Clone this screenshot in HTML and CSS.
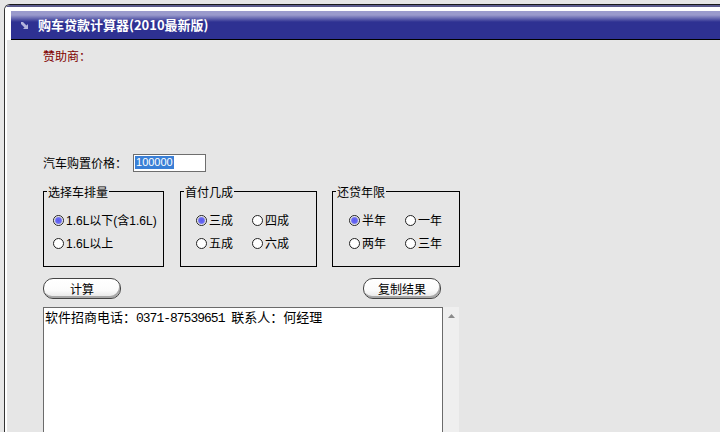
FILE: index.html
```html
<!DOCTYPE html>
<html lang="zh-CN">
<head>
    <meta charset="UTF-8">
    <title>购车贷款计算器(2010最新版)</title>
    <link rel="stylesheet" href="styles.css">
</head>
<body>
    <div class="window">
        <div class="window-head">
            <div class="titlebar">
                <svg class="title-icon" width="7" height="7" viewBox="0 0 7 7">
                    <path d="M0 0 L2 0 L7 5 L7 7 L5 7 L0 2 Z" fill="#b4b4dc"/>
                    <path d="M7 2 L7 7 L2 7 Z" fill="#b4b4dc"/>
                </svg>
                <span class="title-text">购车贷款计算器(2010最新版)</span>
            </div>
        </div>

        <div class="content">
            <div class="sponsor">赞助商：</div>

            <div class="price-row">
                <label class="price-label">汽车购置价格：</label>
                <div class="price-input"><span class="selected">100000</span></div>
            </div>

            <div class="groups">
                <fieldset class="group group-engine">
                    <legend>选择车排量</legend>
                    <div class="opts">
                        <div class="opt"><span class="radio on"></span>1.6L以下(含1.6L)</div>
                        <div class="opt"><span class="radio"></span>1.6L以上</div>
                    </div>
                </fieldset>
                <fieldset class="group group-down">
                    <legend>首付几成</legend>
                    <div class="opts two-col">
                        <div class="opt"><span class="radio on"></span>三成</div>
                        <div class="opt"><span class="radio"></span>四成</div>
                        <div class="opt"><span class="radio"></span>五成</div>
                        <div class="opt"><span class="radio"></span>六成</div>
                    </div>
                </fieldset>
                <fieldset class="group group-years">
                    <legend>还贷年限</legend>
                    <div class="opts two-col">
                        <div class="opt"><span class="radio on"></span>半年</div>
                        <div class="opt"><span class="radio"></span>一年</div>
                        <div class="opt"><span class="radio"></span>两年</div>
                        <div class="opt"><span class="radio"></span>三年</div>
                    </div>
                </fieldset>
            </div>

            <div class="buttons">
                <button class="pill-button">计算</button>
                <button class="pill-button">复制结果</button>
            </div>

            <div class="result-row">
                <div class="result">软件招商电话：<span class="ascii">0371-87539651 </span>联系人：何经理</div>
                <div class="scrollbar">
                    <svg class="scroll-up" width="7" height="4" viewBox="0 0 7 4">
                        <path d="M0 4 L3.5 0 L7 4 Z" fill="#8a8a8a"/>
                    </svg>
                </div>
            </div>
        </div>
    </div>
</body>
</html>
```

FILE: styles.css
```css
body {
    margin: 0;
    background-color: #e6e6e6;
    font-family: "Liberation Sans", "Noto Sans CJK SC", sans-serif;
    font-size: 12px;
    color: #000;
    overflow: hidden;
}

.window {
    margin: 4px 0 0 4px;
    border-top: 1px solid #1a1a1a;
    border-left: 1px solid #333;
    border-top-left-radius: 6px;
    overflow: hidden;
    background-color: #fff;
}

.window-head {
    border-top: 2px solid #5b5b8c;
    padding: 4px 0 0 6px;
    background-color: #fff;
}

.titlebar {
    height: 28px;
    border-bottom: 1px solid #000;
    background: linear-gradient(#9a9acc 0, #9a9acc 4px, #2e3192 11px, #2e3192 100%);
    display: flex;
    align-items: center;
    padding-left: 10px;
    gap: 10px;
}

.title-text {
    color: #fff;
    font-family: "Noto Sans CJK SC", sans-serif;
    font-weight: bold;
    font-size: 13px;
    line-height: 16px;
}

.content {
    background-color: #e6e6e6;
    border-left: 2px solid #fff;
    padding: 8px 0 0 36px;
    height: 400px;
}

.sponsor {
    color: #800000;
    line-height: 16px;
    font-family: "Noto Sans CJK SC", sans-serif;
}

.price-row {
    display: flex;
    align-items: center;
    gap: 6px;
    margin-top: 90px;
    height: 18px;
}

.price-label {
    font-family: "Noto Sans CJK SC", sans-serif;
    line-height: 14px;
}

.price-input {
    box-sizing: border-box;
    width: 73px;
    height: 18px;
    border: 1px solid #6e6e6e;
    background-color: #fff;
    padding: 1px 0 0 1px;
    font-size: 11px;
    line-height: 13px;
}

.selected {
    background-color: #3a7fd6;
    color: #fff;
    display: inline-block;
    padding: 0 1px;
}

.groups {
    display: flex;
    margin-top: 13px;
}

.group {
    box-sizing: border-box;
    margin: 0;
    border: 1px solid #000;
    padding: 0 0 0 3px;
    min-width: 0;
}

.group legend {
    padding: 0 1px;
    line-height: 13px;
    font-family: "Noto Sans CJK SC", sans-serif;
}

.group-engine {
    width: 121px;
}

.group-down {
    width: 137px;
    margin-left: 16px;
}

.group-years {
    width: 128px;
    margin-left: 15px;
}

.opts {
    display: grid;
    grid-auto-rows: 23px;
    align-items: center;
    padding: 11px 0 11px 6px;
}

.two-col {
    grid-template-columns: 56px 56px;
}

.group-down .opts {
    padding-left: 12px;
}

.group-years .opts {
    padding-left: 13px;
}

.opt {
    display: flex;
    align-items: center;
    gap: 2px;
    white-space: nowrap;
    line-height: 14px;
}

.radio {
    box-sizing: border-box;
    width: 11px;
    height: 11px;
    border: 1px solid #222;
    border-radius: 50%;
    background-color: #fff;
    flex: none;
}

.radio.on {
    background: radial-gradient(circle, #5a5aee 0, #6a6af5 2.8px, #b8b8dc 3.6px, #fff 4.3px);
}

.buttons {
    display: flex;
    justify-content: space-between;
    width: 398px;
    margin-top: 11px;
}

.pill-button {
    box-sizing: border-box;
    width: 78px;
    height: 21px;
    padding: 0;
    border: 1px solid #444;
    border-radius: 10px;
    background: linear-gradient(#fff 0, #fbfbfb 60%, #e4e4e4 100%);
    box-shadow: inset -1px -2px 0 #a8a8a8;
    font-family: "Noto Sans CJK SC", sans-serif;
    font-size: 12px;
    line-height: 18px;
    color: #000;
}

.result-row {
    display: flex;
    margin-top: 8px;
}

.result {
    box-sizing: border-box;
    width: 400px;
    height: 140px;
    border: 1px solid #6b6b6b;
    background-color: #fff;
    padding: 1px 1px;
    font-family: "Noto Sans CJK SC", monospace;
    font-size: 13px;
    line-height: 15px;
    white-space: nowrap;
}

.ascii {
    font-family: "Liberation Mono", monospace;
    font-size: 13px;
    letter-spacing: -1px;
}

.scrollbar {
    width: 16px;
    height: 140px;
    background-color: #efefef;
    display: flex;
    justify-content: center;
    padding-top: 7px;
    box-sizing: border-box;
}

.scroll-up {
    display: block;
}
```
